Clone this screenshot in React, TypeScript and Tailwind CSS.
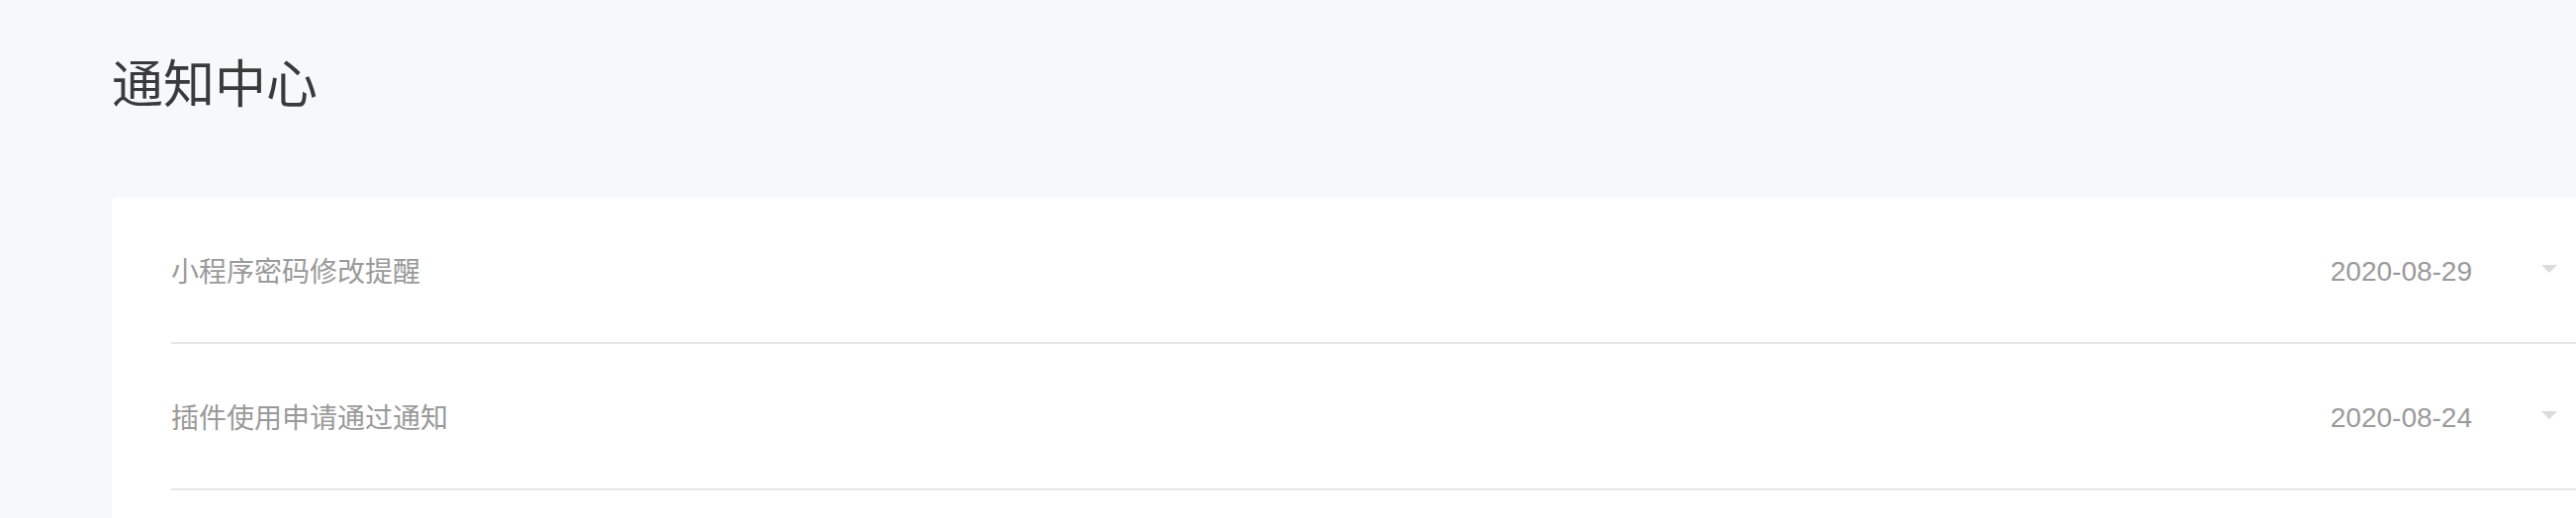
import React from "react";

const items = [
  { title: "小程序密码修改提醒", date: "2020-08-29" },
  { title: "插件使用申请通过通知", date: "2020-08-24" },
];

export default function App() {
  return (
    <div className="flex h-[524px] w-full flex-col overflow-hidden bg-[#f7f8fa] pl-[113px] pt-[50px]">
      <h1
        className="h-[64px] text-[52px] leading-[64px] text-[#3a3a3a] font-normal"
        style={{ fontFamily: '"Noto Sans CJK SC", "Noto Sans", sans-serif' }}
      >
        通知中心
      </h1>
      <div className="mt-[86px] flex-1 rounded-tl-[5px] bg-white pl-[60px]">
        {items.map((it) => (
          <div
            key={it.title}
            className="flex h-[148px] items-center border-b-2 border-[#e5e5ea] pr-[19px]"
          >
            <div
              className="flex-1 text-[28px] leading-[40px] text-[#9a9a9a]"
              style={{ fontFamily: '"Noto Sans CJK SC", "Noto Sans", sans-serif' }}
            >
              {it.title}
            </div>
            <div
              className="mt-[3px] text-[28px] leading-[40px] text-[#9a9a9a]"
              style={{ fontFamily: '"Liberation Sans", Arial, sans-serif' }}
            >
              {it.date}
            </div>
            <svg className="ml-[70px] mb-[2px]" width="16" height="8" viewBox="0 0 16 8">
              <polygon points="0,0 16,0 8,8" fill="#dcdce0" />
            </svg>
          </div>
        ))}
      </div>
    </div>
  );
}
